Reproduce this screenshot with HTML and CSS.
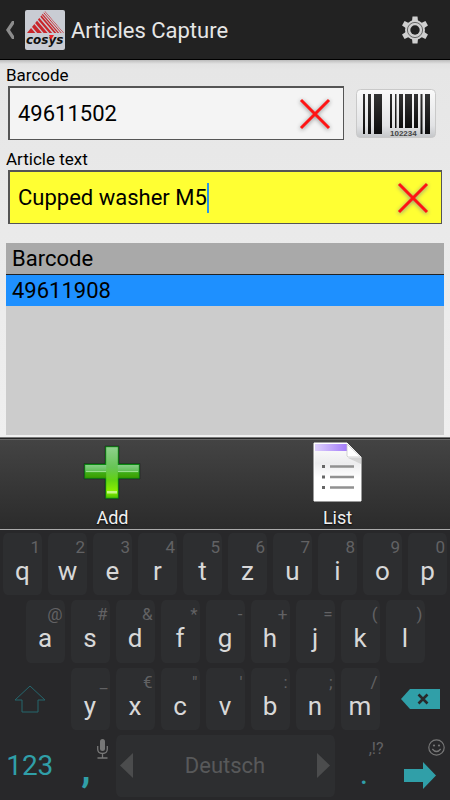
FILE: index.html
```
<!DOCTYPE html>
<html lang="en">
<head>
<meta charset="utf-8">
<meta name="viewport" content="width=device-width, initial-scale=1">
<title>Articles Capture</title>
<link rel="stylesheet" href="styles.css">
</head>
<body>
<header class="bar">
	<button class="back" type="button" aria-label="Back">
		<svg width="10" height="18" viewBox="0 0 10 18"><path d="M8.500 0 H9 V3 L5 9 L9 15 V18 H7 L1 9 L7 0Z" fill="#8c8c8c"/></svg>
	</button>
	<svg class="logo" width="40" height="40" viewBox="0 0 40 40">
		<defs><clipPath id="tri"><path d="M2 23 L20 1 L39 23Z"/></clipPath></defs>
		<rect width="40" height="40" rx="2" fill="#c9ccd3"/>
		<g clip-path="url(#tri)" stroke="#c9262b">
			<path d="M-2 14 L16 35" stroke-width="7"/>
			<path d="M3 9.500 L21 30.500" stroke-width="3.600"/>
			<path d="M6.500 6.500 L24.500 27.500" stroke-width="3"/>
			<path d="M9.500 4 L27.500 25" stroke-width="2.200"/>
			<path d="M12 1.500 L32 25" stroke-width="1.700"/>
			<path d="M14 .5 L36 26" stroke-width="1.200"/>
			<path d="M16 -.5 L38 25" stroke-width=".9"/>
			<path d="M18 -1 L41 25.500" stroke-width=".9"/>
		</g>
		<text x="1" y="34" class="logo-text">cosys</text>
		<path d="M24 25 H29 L26 30Z" fill="#e8222a"/>
	</svg>
	<h1>Articles Capture</h1>
	<button class="settings" type="button" aria-label="Settings">
		<svg width="28" height="28" viewBox="0 0 28 28">
			<g fill="#cfcfcf">
				<path d="M11 5 L11.500 .5 H16.500 L17 5 V23 L16.500 27.500 H11.500 L11 23Z"/>
				<path d="M11 5 L11.500 .5 H16.500 L17 5 V23 L16.500 27.500 H11.500 L11 23Z" transform="rotate(60 14 14)"/>
				<path d="M11 5 L11.500 .5 H16.500 L17 5 V23 L16.500 27.500 H11.500 L11 23Z" transform="rotate(120 14 14)"/>
				<circle cx="14" cy="14" r="10"/>
			</g>
			<circle cx="14" cy="14" r="7.600" fill="none" stroke="#666" stroke-width="1"/>
			<circle cx="14" cy="14" r="4.700" fill="#222"/>
		</svg>
	</button>
</header>

<main>
	<form class="capture">
		<label for="barcode">Barcode</label>
		<div class="line">
			<div class="field">
				<input id="barcode" type="text" value="49611502">
				<button class="clear" type="button" aria-label="Clear barcode">
					<svg width="36" height="36" viewBox="0 0 36 36"><path d="M4 4 L32 32 M32 4 L4 32" stroke="#ff1414" stroke-width="3"/></svg>
				</button>
			</div>
			<button class="scan" type="button" aria-label="Scan barcode">
				<svg width="80" height="49" viewBox="0 0 80 49">
					<defs>
						<linearGradient id="card" x2="0" y2="1"><stop offset="0" stop-color="#fafafa"/><stop offset=".75" stop-color="#e2e3e5"/><stop offset="1" stop-color="#c4c6c9"/></linearGradient>
						<linearGradient id="ink" x2="0" y2="1"><stop offset="0" stop-color="#333"/><stop offset="1" stop-color="#0c0c0c"/></linearGradient>
					</defs>
					<rect x=".5" y=".5" width="79" height="48" rx="4" fill="url(#card)" stroke="#c9c9c9"/>
					<g fill="url(#ink)">
						<rect x="7" y="5" width="2" height="40"/>
						<rect x="12" y="5" width="3" height="40"/>
						<rect x="18" y="5" width="8" height="40"/>
						<rect x="34" y="5" width="2" height="34"/>
						<rect x="39" y="5" width="1.500" height="34"/>
						<rect x="43" y="5" width="4" height="34"/>
						<rect x="49" y="5" width="7" height="34"/>
						<rect x="58" y="5" width="4" height="34"/>
						<rect x="64.500" y="5" width="2" height="40"/>
						<rect x="69" y="5" width="5" height="40"/>
					</g>
					<text x="34" y="47" class="scan-text">102234</text>
				</svg>
			</button>
		</div>
		<label for="article">Article text</label>
		<div class="line">
			<div class="field active">
				<input id="article" type="text" value="Cupped washer M5"><span class="caret"></span>
				<button class="clear" type="button" aria-label="Clear article text">
					<svg width="36" height="36" viewBox="0 0 36 36"><path d="M4 4 L32 32 M32 4 L4 32" stroke="#ff1414" stroke-width="3"/></svg>
				</button>
			</div>
		</div>
	</form>
	<div class="list">
		<table>
			<thead><tr><th>Barcode</th></tr></thead>
			<tbody><tr><td>49611908</td></tr></tbody>
		</table>
	</div>
</main>

<nav class="tools">
	<button type="button">
		<svg width="60" height="60" viewBox="0 0 60 60">
			<defs>
				<linearGradient id="up" x2="0" y2="1"><stop offset="0" stop-color="#8fd08d"/><stop offset=".4" stop-color="#66c455"/><stop offset=".65" stop-color="#62d313"/><stop offset=".87" stop-color="#8cf000"/><stop offset="1" stop-color="#4fc400"/></linearGradient>
				<linearGradient id="across" x2="0" y2="1"><stop offset="0" stop-color="#86cf86"/><stop offset=".55" stop-color="#5cbd50"/><stop offset=".6" stop-color="#3fae14"/><stop offset="1" stop-color="#3c9c00"/></linearGradient>
			</defs>
			<path d="M22 4 H36 V21.500 H57 V37 H36 V57 H22 V37 H1 V21.500 H22Z" fill="#0b8a12" stroke="#222" stroke-width=".6"/>
			<rect x="2.200" y="23" width="53.600" height="12.800" fill="url(#across)"/>
			<path d="M3 29.500 H23 M35 29.500 H55" stroke="#9be08e"/>
			<rect x="23.200" y="5.200" width="11.600" height="50.600" fill="url(#up)"/>
			<rect x="24" y="49" width="10" height="2.500" fill="#c5f787"/>
		</svg>
		<span>Add</span>
	</button>
	<button type="button">
		<svg width="60" height="60" viewBox="0 0 60 60">
			<defs>
				<linearGradient id="violet"><stop offset="0" stop-color="#ddd0fb"/><stop offset="1" stop-color="#a47cfa"/></linearGradient>
				<linearGradient id="paper" x2="0" y2="1"><stop offset="0" stop-color="#fff"/><stop offset=".35" stop-color="#ececee"/><stop offset=".6" stop-color="#fff"/></linearGradient>
			</defs>
			<path d="M6 1 H39 L53 15 V59 H6Z" fill="url(#paper)" stroke="#fff"/>
			<rect x="7" y="2" width="32" height="7" fill="url(#violet)"/>
			<path d="M39 14 V2 L52.500 15 H40Z" fill="#fff" stroke="#c8c8c8" stroke-width=".8"/>
			<path d="M40 16 H53 V22Z" fill="#d4d4d4"/>
			<path d="M14 24.500 H17 M14 35 H17 M14 45.500 H17" stroke="#666" stroke-width="3"/>
			<path d="M22 24.500 H46 M22 35 H46 M22 45.500 H46" stroke="#919191" stroke-width="2.500"/>
		</svg>
		<span>List</span>
	</button>
</nav>

<section class="keyboard" aria-label="Keyboard">
	<div class="row">
		<button class="key"><small>1</small>q</button>
		<button class="key"><small>2</small>w</button>
		<button class="key"><small>3</small>e</button>
		<button class="key"><small>4</small>r</button>
		<button class="key"><small>5</small>t</button>
		<button class="key"><small>6</small>z</button>
		<button class="key"><small>7</small>u</button>
		<button class="key"><small>8</small>i</button>
		<button class="key"><small>9</small>o</button>
		<button class="key"><small>0</small>p</button>
	</div>
	<div class="row inset">
		<button class="key"><small>@</small>a</button>
		<button class="key"><small>#</small>s</button>
		<button class="key"><small>&amp;</small>d</button>
		<button class="key"><small>*</small>f</button>
		<button class="key"><small>-</small>g</button>
		<button class="key"><small>+</small>h</button>
		<button class="key"><small>=</small>j</button>
		<button class="key"><small>(</small>k</button>
		<button class="key"><small>)</small>l</button>
	</div>
	<div class="row">
		<button class="key wide icon shift" aria-label="Shift">
			<svg width="32" height="28" viewBox="0 0 32 28"><path d="M16 1 L31 15 H24 V27 H8 V15 H1Z" fill="none" stroke="#25666d"/></svg>
		</button>
		<button class="key"><small>_</small>y</button>
		<button class="key"><small>€</small>x</button>
		<button class="key"><small>"</small>c</button>
		<button class="key"><small>'</small>v</button>
		<button class="key"><small>:</small>b</button>
		<button class="key"><small>;</small>n</button>
		<button class="key"><small>/</small>m</button>
		<button class="key wide icon erase" aria-label="Delete">
			<svg width="39" height="20" viewBox="0 0 39 20"><path d="M0 10 L9 0 H39 V20 H9Z" fill="#309fa8"/><path d="M17.500 5.500 L26.500 14.500 M26.500 5.500 L17.500 14.500" stroke="#28292b" stroke-width="2.600"/></svg>
		</button>
	</div>
	<div class="row">
		<button class="key wide digits">123</button>
		<button class="key plain comma">
			<small><svg width="11" height="20" viewBox="0 0 11 20"><rect x="3" y="0" width="5" height="12" rx="2.500" fill="#777"/><path d="M.7 7 V10 Q.7 14.500 5.500 14.500 Q10.300 14.500 10.300 10 V7 M5.500 14.500 V19 M.5 19 H10.500" fill="none" stroke="#777" stroke-width="1.300"/></svg></small>,
		</button>
		<button class="key space">
			<svg width="13" height="25" viewBox="0 0 13 25"><path d="M13 0 V25 L0 12.500Z" fill="#4b4c4d"/></svg>
			<span>Deutsch</span>
			<svg width="13" height="25" viewBox="0 0 13 25"><path d="M0 0 V25 L13 12.500Z" fill="#4b4c4d"/></svg>
		</button>
		<button class="key plain period"><small>,!?</small>.</button>
		<button class="key wide icon enter" aria-label="Enter">
			<small><svg width="17" height="17" viewBox="0 0 17 17"><circle cx="8.500" cy="8.500" r="7.700" fill="none" stroke="#777" stroke-width="1.200"/><circle cx="6" cy="6.500" r="1.100" fill="#777"/><circle cx="11" cy="6.500" r="1.100" fill="#777"/><path d="M4.300 10 Q8.500 15 12.700 10" fill="none" stroke="#777" stroke-width="1.300"/></svg></small>
			<svg width="32" height="27" viewBox="0 0 32 27"><path d="M0 7 H19 V0 L32 13.500 L19 27 V20 H0Z" fill="#309fa8"/></svg>
		</button>
	</div>
</section>
</body>
</html>
```
FILE: styles.css
```
*{box-sizing:border-box;}
body{margin:0;min-height:100vh;display:flex;flex-direction:column;background:#28282a;color:#000;font-family:Roboto,"Liberation Sans",sans-serif;}
button{margin:0;padding:0;border:0;background:none;color:inherit;font-family:inherit;cursor:pointer;}
svg{display:block;flex:none;}

.bar{display:flex;align-items:center;height:60px;padding:0 21px 0 5px;background:#222;border-bottom:1px solid #000;}
.back{width:20px;}
.logo-text{font:italic bold 12px "DejaVu Sans",sans-serif;fill:#111;}
.bar h1{flex:1;margin:0;padding:2px 0 0 6px;color:#e6e6e6;font-size:22px;font-weight:400;line-height:30px;}

main{flex:1;display:flex;flex-direction:column;padding:4px 6px 2px;background:linear-gradient(#bbb,#e2e2e2 4px,#e6e6e6 10px,#efefef);}
.capture label{display:block;font-size:17px;line-height:22px;}
.line{display:flex;align-items:center;gap:12px;padding:0 2px 8px;}
.field{flex:1;display:flex;align-items:center;height:54px;padding:0 10px 0 8px;background:#f4f4f4;border:1px solid #555;border-width:2px 1px 1px 2px;}
.field input{flex:0 1 auto;min-width:0;field-sizing:content;margin:0;padding:0;border:0;outline:0;background:none;color:#000;font:22px/30px Roboto,"Liberation Sans",sans-serif;}
.field.active{background:#ff3;}
.caret{flex:none;width:2px;height:30px;background:#2a95e8;}
.clear{margin-left:auto;}
.clear svg{filter:drop-shadow(0 1px 2px #888);}
.scan{margin-right:6px;}
.scan-text{font:bold 8px "Liberation Sans",sans-serif;fill:#444;}

.list{flex:1;margin-top:11px;background:#ccc;}
.list table{width:100%;border-collapse:collapse;font-size:22px;line-height:31px;text-align:left;}
.list th,.list td{padding:0 6px;font-weight:400;}
.list th{background:#a9a9a9;border-bottom:1px solid #222;}
.list td{background:#1e90ff;}

.tools{display:flex;height:93px;border-top:1px solid #777;border-bottom:1px solid #aaa;background:linear-gradient(#444,#2b2b2b);box-shadow:inset 0 1px #222,inset 0 2px #666;}
.tools button{flex:1;display:flex;flex-direction:column;align-items:center;padding-top:4px;color:#f0f0f0;font-size:18px;line-height:22px;text-shadow:0 1px 2px #000;}
.tools span{margin-top:5px;}

.keyboard{display:flex;flex-direction:column;gap:5px;height:270px;padding:3px 0;background:#28282a;}
.row{flex:1;display:flex;}
.row.inset{padding:0 5%;}
.key{position:relative;width:10%;padding-top:14px;border:0 solid transparent;border-width:0 3px;border-radius:7px;background:#2d2e30 padding-box;color:#d8d8d8;font-size:26px;line-height:30px;}
.inset .key{flex:1;}
.key small{position:absolute;top:4px;right:2px;color:#626264;font-size:17px;line-height:20px;}
.key.wide{width:15%;background:none;}
.key.plain{background:none;}
.key.icon{display:flex;align-items:center;justify-content:center;padding-top:0;}
.key.shift{padding-right:8px;}
.key.erase{padding-left:8px;}
.key.digits{padding:0 8px 0 0;color:#309fa8;font-size:28px;}
.key.comma{padding:6px 8px 0 0;color:#309fa8;font-size:38px;font-weight:700;}
.key.period{padding-left:8px;color:#309fa8;font-size:32px;}
.key.period small{right:-4px;font-size:16px;}
.key.enter{padding:20px 0 0 8px;}
.key.space{width:50%;display:flex;align-items:center;justify-content:space-between;padding:0 4px;color:#58595a;font-size:22px;}
```
